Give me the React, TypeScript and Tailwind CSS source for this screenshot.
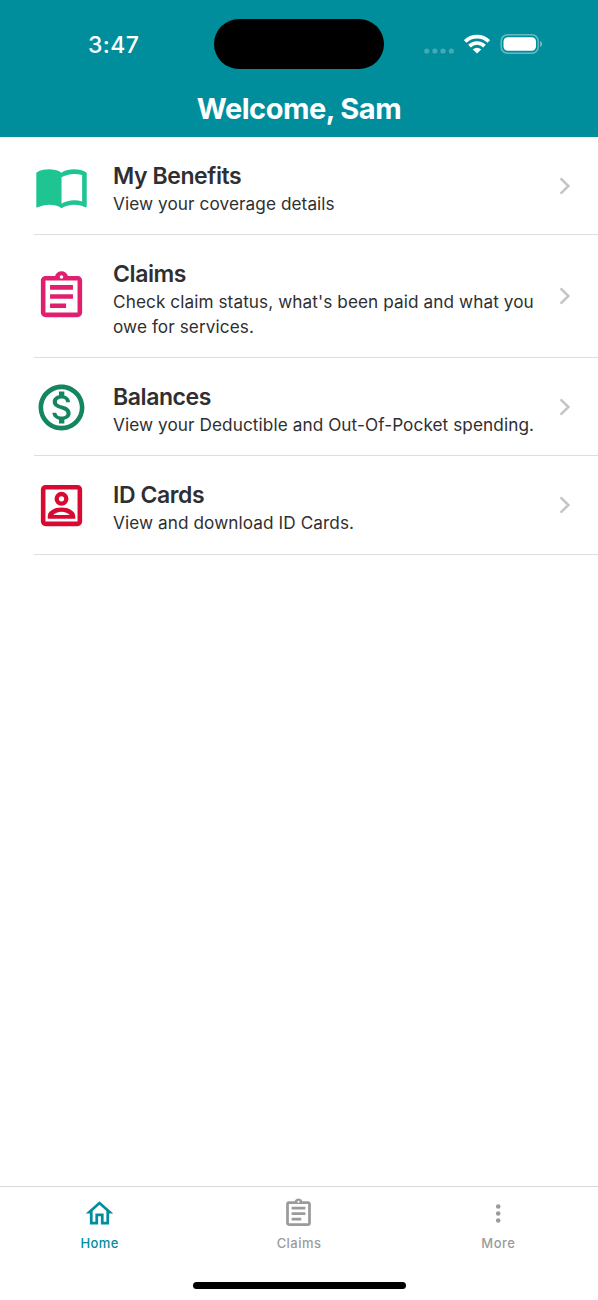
import type { ComponentType } from "react";
import {
  MdImportContacts,
  MdOutlineAssignment,
  MdOutlineHome,
  MdOutlineMonetizationOn,
} from "react-icons/md";

type Icon = ComponentType<{ className?: string }>;

interface MenuItem {
  title: string;
  description: string;
  icon: Icon;
  color: string;
  height: string;
}

interface Tab {
  label: string;
  icon: Icon;
  active?: boolean;
}

function IdCardIcon({ className }: { className?: string }) {
  return (
    <svg viewBox="0 0 24 24" className={className} fill="none" stroke="currentColor">
      <rect x="4" y="4" width="16" height="16" rx="1" strokeWidth="2" />
      <circle cx="12" cy="9.1" r="2.1" strokeWidth="1.9" />
      <path
        d="M6 17.8v-1c0-2.6 3.2-3.9 6-3.9s6 1.3 6 3.9v1zM8.4 16.1h7.2c-.7-.8-2.1-1.4-3.6-1.4s-2.9.6-3.6 1.4z"
        fill="currentColor"
        fillRule="evenodd"
        stroke="none"
      />
    </svg>
  );
}

function MoreIcon({ className }: { className?: string }) {
  return (
    <svg viewBox="0 0 32 32" className={className} fill="currentColor">
      <circle cx="15.7" cy="9.3" r="2.2" />
      <circle cx="15.7" cy="16" r="2.2" />
      <circle cx="15.7" cy="22.7" r="2.2" />
    </svg>
  );
}

const menuItems: MenuItem[] = [
  {
    title: "My Benefits",
    description: "View your coverage details",
    icon: MdImportContacts,
    color: "text-[#1fc493]",
    height: "h-[98px]",
  },
  {
    title: "Claims",
    description: "Check claim status, what's been paid and what you owe for services.",
    icon: MdOutlineAssignment,
    color: "text-[#e0206f]",
    height: "h-[123px]",
  },
  {
    title: "Balances",
    description: "View your Deductible and Out-Of-Pocket spending.",
    icon: MdOutlineMonetizationOn,
    color: "text-[#14855f]",
    height: "h-[98px]",
  },
  {
    title: "ID Cards",
    description: "View and download ID Cards.",
    icon: IdCardIcon,
    color: "text-[#d90a32]",
    height: "h-[99px]",
  },
];

const tabs: Tab[] = [
  { label: "Home", icon: MdOutlineHome, active: true },
  { label: "Claims", icon: MdOutlineAssignment },
  { label: "More", icon: MoreIcon },
];

function StatusBar() {
  return (
    <div className="flex h-[88px] items-start">
      <span className="w-[214px] pt-[30px] pl-[88px] text-[23px] leading-[30px] font-medium tracking-[0.4px]">
        3:47
      </span>
      <div className="mt-[19px] h-[50px] w-[170px] rounded-full bg-black" />
      <div className="flex h-[88px] items-center pl-[40px]">
        <svg width="30" height="6" viewBox="0 0 30 6" className="mt-[13px]" fill="#45a9b6">
          <circle cx="2.8" cy="3" r="2.6" />
          <circle cx="10.9" cy="3" r="2.6" />
          <circle cx="19" cy="3" r="2.6" />
          <circle cx="27.4" cy="3" r="2.6" />
        </svg>
        <svg width="26" height="20" viewBox="0 0 26 20" className="ml-[10px]">
          <g fill="none" stroke="#fff" strokeWidth="3.7">
            <path d="M1.2 7.5a16.7 16.7 0 0 1 23.6 0" />
            <path d="M5.5 12.1a10.6 10.6 0 0 1 15 0" />
          </g>
          <path d="M13 19.6 8.8 15.4a6 6 0 0 1 8.4 0z" fill="#fff" />
        </svg>
        <svg width="43" height="20" viewBox="0 0 43 20" className="ml-[10px]">
          <rect x="1.2" y="0.8" width="37" height="18.4" rx="6.2" fill="none" stroke="#66b9c4" strokeWidth="1.5" />
          <rect x="3.5" y="3.3" width="32.5" height="13.4" rx="4.2" fill="#fff" />
          <path d="M40 7c3 1 3 5 0 6z" fill="#66b9c4" />
        </svg>
      </div>
    </div>
  );
}

function MenuRow({ item }: { item: MenuItem }) {
  const Icon = item.icon;
  return (
    <li className={`ml-[34px] flex items-center border-b border-[#dedede] ${item.height}`}>
      <Icon className={`mt-px h-[55px] w-[55px] shrink-0 ${item.color}`} />
      <div className="ml-[24px] w-[430px] shrink-0 pt-[6px] text-[#2f2f31]">
        <h2 className="text-[23px] leading-[31px] font-semibold tracking-[-0.42px]">
          {item.title}
        </h2>
        <p className="text-[17.2px] leading-[24.6px] tracking-[0.08px]">{item.description}</p>
      </div>
      <svg width="12" height="18" viewBox="0 0 12 18" className="ml-[16px]" fill="none">
        <path d="M1.6 1.3 9.4 9l-7.8 7.7" stroke="#c5c5c7" strokeWidth="2.5" />
      </svg>
    </li>
  );
}

export default function App() {
  return (
    <div className="flex h-[1300px] w-[598px] flex-col bg-white font-[Inter,sans-serif]">
      <header className="h-[137px] bg-[#008e9c] text-white">
        <StatusBar />
        <h1 className="text-center text-[29px] leading-[41px] font-bold tracking-[-0.5px]">
          Welcome, Sam
        </h1>
      </header>

      <ul className="flex-1">
        {menuItems.map((item) => (
          <MenuRow key={item.title} item={item} />
        ))}
      </ul>

      <nav className="flex h-[114px] flex-col items-center border-t border-[#d8d8d8]">
        <div className="flex w-full">
          {tabs.map(({ label, icon: Icon, active }) => (
            <button
              key={label}
              className={`flex h-[95px] flex-1 flex-col items-center pt-[10px] ${
                active ? "text-[#008e9c]" : "text-[#9b9b9b]"
              }`}
            >
              <Icon className="h-[33px] w-[33px]" />
              <span className="mt-[4px] text-[13px] leading-[18px] font-medium tracking-[0.45px]">
                {label}
              </span>
            </button>
          ))}
        </div>
        <div className="h-[7px] w-[213px] rounded-full bg-black" />
      </nav>
    </div>
  );
}
